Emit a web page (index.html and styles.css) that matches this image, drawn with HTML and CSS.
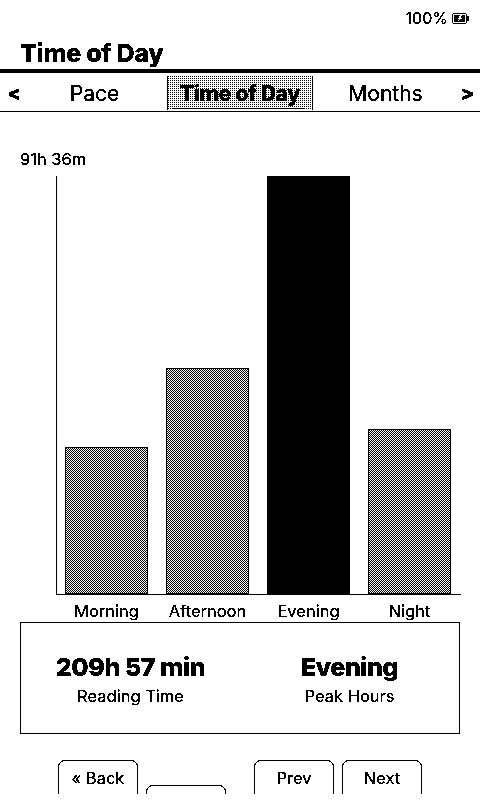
FILE: index.html
```html
<!DOCTYPE html>
<html lang="en">
<head>
<meta charset="utf-8">
<title>Time of Day</title>
<link rel="stylesheet" href="styles.css">
</head>
<body>
<div class="screen">
  <div class="status">
    <span>100%</span>
    <svg class="battery" width="17" height="11" viewBox="0 0 17 11"><path d="M1.500 .5h12l1 1v8l-1 1h-12l-1-1v-8z" fill="#fff" stroke="#000"/><path d="M2 2h11v7H2z" fill="#000"/><path d="M8.500 2 5 6h2L5.500 9 10.500 5H8.500l1.500-3z" fill="#fff"/><path d="M15 3.500h2v4h-2z" fill="#000"/></svg>
  </div>
  <h1 class="title">Time of Day</h1>
  <nav class="tabs">
    <span class="arrow prev">&lt;</span>
    <span class="tab">Pace</span>
    <span class="tab active">Time of Day</span>
    <span class="tab">Months</span>
    <span class="arrow next">&gt;</span>
  </nav>
  <div class="chart">
    <div class="max-label">91h 36m</div>
    <div class="plot">
      <div class="col"><div class="bar" style="height:147px"></div></div>
      <div class="col"><div class="bar" style="height:226px"></div></div>
      <div class="col"><div class="bar peak" style="height:418px"></div></div>
      <div class="col"><div class="bar" style="height:165px"></div></div>
    </div>
    <div class="labels">
      <span>Morning</span><span>Afternoon</span><span>Evening</span><span>Night</span>
    </div>
  </div>
  <section class="stats">
    <div class="stat"><strong>209h 57 min</strong><span>Reading Time</span></div>
    <div class="stat"><strong>Evening</strong><span>Peak Hours</span></div>
  </section>
  <footer class="buttons">
    <button class="btn">« Back</button>
    <button class="btn low"></button>
    <button class="btn push">Prev</button>
    <button class="btn">Next</button>
  </footer>
</div>
</body>
</html>
```
FILE: styles.css
```css
html, body { margin: 0; padding: 0; background: #fff; }
body { width: 480px; height: 800px; overflow: hidden; }
.screen {
  width: 480px; height: 794px; overflow: hidden; background: #fff; color: #000;
  font-family: Inter, "Liberation Sans", Arial, sans-serif;
  filter: grayscale(1) brightness(.72) contrast(100);
}
.status {
  height: 36px; display: flex; justify-content: flex-end; align-items: center; gap: 4px;
  padding-right: 11px; font-size: 16px; box-sizing: border-box;
}
.battery { display: block; }
.title { margin: 0; height: 33px; padding-left: 20px; font-size: 25px; line-height: 35px; font-weight: 800; letter-spacing: -.3px; }
.tabs {
  display: flex; align-items: stretch; height: 38px; box-sizing: content-box;
  border-top: 4px solid #000; border-bottom: 1px solid #000;
  font-size: 21px;
}
.arrow { width: 22px; box-sizing: border-box; display: flex; align-items: center; justify-content: center; padding-top: 2px; font-weight: 800; font-size: 20px; }
.arrow.prev { padding-left: 6px; }
.arrow.next { padding-right: 3px; }
.tab { display: flex; align-items: center; justify-content: center; flex: 1; padding-top: 3px; }
.tab.active {
  position: relative;
  flex: 0 0 146px; box-sizing: border-box; font-weight: 800; letter-spacing: -.3px; margin: 3px 0 1px; padding-top: 0;
  border-left: 1px solid #000; border-right: 1px solid #000;
  background: url("data:image/svg+xml,%3Csvg xmlns='http://www.w3.org/2000/svg' width='2' height='2' shape-rendering='crispEdges'%3E%3Crect width='2' height='2' fill='%23fff'/%3E%3Crect width='1' height='1'/%3E%3C/svg%3E") 0 0 / 2px 2px;
}
.tab.active::after {
  content: ""; position: absolute; left: 5px; right: 7px; bottom: 1px; height: 1px; background: #000;
}
.chart { padding: 38px 19px 0 20px; }
.max-label { font-size: 16.500px; line-height: 18px; height: 26px; }
.plot {
  height: 418px; margin-left: 36px; display: flex; gap: 18px; padding-left: 8px; padding-right: 10px;
  border-left: 1px solid #000; border-bottom: 1px solid #000; align-items: flex-end;
}
.col { flex: 0 0 83px; display: flex; align-items: flex-end; }
.bar {
  width: 100%; box-sizing: border-box; border: 1px solid #000;
  background: url("data:image/svg+xml,%3Csvg xmlns='http://www.w3.org/2000/svg' width='2' height='2' shape-rendering='crispEdges'%3E%3Crect width='2' height='2' fill='%23fff'/%3E%3Crect width='1' height='1'/%3E%3Crect x='1' y='1' width='1' height='1'/%3E%3C/svg%3E") 0 0 / 2px 2px;
}
.bar.peak { background: #000; }
.labels { margin-left: 37px; padding-left: 8px; display: flex; gap: 18px; height: 27px; font-size: 16.500px; line-height: 33px; }
.labels span { flex: 0 0 83px; text-align: center; white-space: nowrap; }
.stats {
  margin: 0 20px; height: 110px; box-sizing: content-box; border: 1px solid #000;
  display: flex; align-items: flex-start;
}
.stat { flex: 1; display: flex; flex-direction: column; align-items: center; padding-top: 28px; }
.stat strong { font-size: 25px; line-height: 33px; font-weight: 800; letter-spacing: -.4px; }
.stat span { font-size: 16.500px; line-height: 25px; }
.buttons { display: flex; gap: 8px; padding: 26px 0 0 58px; align-items: flex-start; }
.btn {
  width: 80px; height: 60px; padding: 0 0 24px; margin: 0; background: #fff; color: #000; border: 1px solid #000; border-radius: 7px;
  font-family: inherit; font-size: 16.500px;
}
.btn.low { margin-top: 25px; }
.btn.push { margin-left: 20px; }
```
